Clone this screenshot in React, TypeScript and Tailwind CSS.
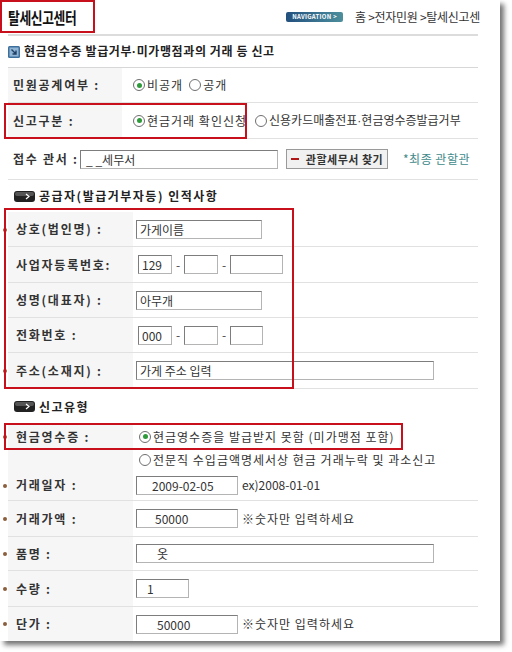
import React from 'react';

const font = { fontFamily: '"Noto Sans CJK KR", "Noto Sans", sans-serif' };

function Radio({ checked }: { checked?: boolean }) {
  return (
    <span className="inline-flex items-center justify-center w-[12px] h-[12px] rounded-full border border-[#6f6f6f] bg-white mr-[2px] shrink-0">
      {checked && <span className="w-[5px] h-[5px] rounded-full bg-[#2f9a3a]" />}
    </span>
  );
}

function Box({ w, children, className = '' }: { w: string; children?: React.ReactNode; className?: string }) {
  return (
    <div
      className={`${w} h-[19px] border border-[#b4b4b4] border-t-[#7d7d7d] border-l-[#7d7d7d] bg-white text-[12px] leading-[17px] text-[#333] px-[3px] overflow-hidden whitespace-nowrap ${className}`}
    >
      {children}
    </div>
  );
}

function Dash() {
  return <span className="w-[12px] text-center text-[12px] text-[#444]">-</span>;
}

function Dot() {
  // narrow middle dot, the CJK one is full width
  return <span className="font-['Liberation_Sans',sans-serif]">·</span>;
}

function Star({ on }: { on?: boolean }) {
  return (
    <div className="w-[5px] flex items-center justify-start">
      {on && <span className="w-[4px] h-[4px] rounded-full bg-[#8b5e3c]" />}
    </div>
  );
}

function Row({
  h,
  star,
  label,
  labelW = 'w-[122px]',
  pl = 'pl-[8px]',
  line = true,
  children,
}: {
  h: string;
  star?: boolean;
  label?: string;
  labelW?: string;
  pl?: string;
  line?: boolean;
  children?: React.ReactNode;
}) {
  return (
    <div className="flex pl-[3px]">
      <Star on={star} />
      <div className={`flex w-[470px] ${h} ${line ? 'border-b border-[#e1e1e1]' : ''}`}>
        <div
          className={`${labelW} ${pl} bg-[#f6f6f6] flex items-center text-[12px] font-bold text-[#333] tracking-[1.75px] whitespace-nowrap`}
        >
          {label}
        </div>
        <div className="flex-1 flex items-center text-[12px] text-[#333] whitespace-nowrap overflow-hidden">
          {children}
        </div>
      </div>
    </div>
  );
}

function SectionIcon() {
  return (
    <svg width="21" height="11" viewBox="0 0 21 11" className="mr-[4px]">
      <rect x="0" y="0" width="21" height="11" rx="3" fill="#222" />
      <rect x="1" y="1" width="19" height="4" rx="2" fill="#555" />
      <path d="M12 3 L15 5.5 L12 8" stroke="#fff" strokeWidth="1.2" fill="none" />
    </svg>
  );
}

function Section({ title }: { title: string }) {
  return (
    <div className="flex items-center pl-[14px] text-[12px] font-bold text-[#222] tracking-[1.5px] whitespace-nowrap">
      <SectionIcon />
      {title}
    </div>
  );
}

export default function App() {
  return (
    <div className="w-[512px] h-[652px] bg-white relative overflow-hidden" style={font}>
      <div className="w-[500px] h-[641px] bg-white shadow-[4px_4px_5px_rgba(0,0,0,0.55)] relative">
        <div className="w-[480px] overflow-hidden">
          {/* title */}
          <div className="h-[34px] flex items-center justify-between pl-[8px]">
            <div className="inline-block origin-left scale-x-[0.8] text-[16px] font-bold text-[#111] tracking-[-0.5px] whitespace-nowrap">
              탈세신고센터
            </div>
            <div className="flex items-center gap-[12px] whitespace-nowrap">
              <div className="w-[57px] h-[10px] rounded-[2px] bg-linear-to-r from-[#23507e] to-[#4d8f9c] flex items-center justify-center text-[6px] leading-none font-bold text-white tracking-[0.3px]">
                NAVIGATION &gt;
              </div>
              <div className="text-[12px] text-[#333] tracking-[-0.3px]">홈 &gt;전자민원 &gt;탈세신고센</div>
            </div>
          </div>
          <div className="ml-[8px] w-[470px] h-[2px] bg-[#dcdcdc]" />

          {/* heading */}
          <div className="h-[32px] flex items-center ml-[8px] w-[470px] border-b border-[#d7d7d7]">
            <svg width="12" height="12" viewBox="0 0 12 12" className="mr-[4px]">
              <rect x="0" y="0" width="12" height="12" rx="1.5" fill="#3d6f9c" />
              <rect x="1.5" y="1.5" width="9" height="9" fill="#8fb4d4" />
              <path d="M3.5 3.5 L8 8 M8 4.5 L8 8 L4.5 8" stroke="#1f3f66" strokeWidth="1.4" fill="none" />
            </svg>
            <span className="text-[12px] font-bold text-[#222] tracking-[0.6px] whitespace-nowrap">
              현금영수증 발급거부<Dot />미가맹점과의 거래 등 신고
            </span>
          </div>

          <Row h="h-[35px]" label="민원공계여부 :" labelW="w-[114px]" pl="pl-[5px]">
            <div className="pl-[11px] flex items-center tracking-[1px]">
              <Radio checked />
              <span>비공개</span>
              <span className="w-[6px]" />
              <Radio />
              <span>공개</span>
            </div>
          </Row>
          <Row h="h-[36px]" label="신고구분 :" labelW="w-[114px]" pl="pl-[5px]">
            <div className="pl-[11px] flex items-center">
              <Radio checked />
              <span className="tracking-[1px]">현금거래 확인신청</span>
              <span className="w-[8px]" />
              <Radio />
              <span>신용카드매출전표<Dot />현금영수증발급거부</span>
            </div>
          </Row>
          <div className="flex pl-[3px]">
            <Star />
            <div className="flex items-center w-[470px] h-[41px] border-b border-[#e1e1e1] pl-[5px] text-[12px] whitespace-nowrap">
              <span className="font-bold text-[#333] tracking-[1.75px] w-[67px]">접수 관서 :</span>
              <Box w="w-[198px]" className="pl-[5px]">_ _세무서</Box>
              <div className="ml-[8px] w-[102px] h-[20px] border border-[#9a9a9a] bg-[#f1f1f1] flex items-center justify-center text-[11px] font-bold text-[#333] tracking-[0.5px]">
                <span className="w-[8px] h-[2px] bg-[#b01818] mr-[7px]" />
                관할세무서 찾기
              </div>
              <span className="ml-[15px] text-[12px] text-[#3f8a8a] tracking-[0.5px]">*최종 관할관</span>
            </div>
          </div>

          <div className="h-[32px] flex items-center">
            <Section title="공급자(발급거부자등) 인적사항" />
          </div>

          <Row h="h-[35px]" star label="상호(법인명) :" labelW="w-[125px]">
            <Box w="w-[126px]" className="ml-[3px]">가게이름</Box>
          </Row>
          <Row h="h-[36px]" label="사업자등록번호:" labelW="w-[125px]">
            <div className="flex items-center ml-[5px]">
              <Box w="w-[34px]">129</Box>
              <Dash />
              <Box w="w-[34px]" />
              <Dash />
              <Box w="w-[53px]" />
            </div>
          </Row>
          <Row h="h-[35px]" label="성명(대표자) :" labelW="w-[125px]">
            <Box w="w-[126px]" className="ml-[3px]">아무개</Box>
          </Row>
          <Row h="h-[35px]" label="전화번호 :" labelW="w-[125px]">
            <div className="flex items-center ml-[5px]">
              <Box w="w-[34px]">000</Box>
              <Dash />
              <Box w="w-[34px]" />
              <Dash />
              <Box w="w-[33px]" />
            </div>
          </Row>
          <Row h="h-[36px]" star label="주소(소재지) :" labelW="w-[125px]">
            <Box w="w-[298px]" className="ml-[3px]">가게 주소 입력</Box>
          </Row>

          <div className="h-[35px] flex items-center">
            <Section title="신고유형" />
          </div>

          <Row h="h-[25px]" star label="현금영수증 :" labelW="w-[125px]" line={false}>
            <div className="ml-[6px] flex items-center tracking-[1px]">
              <Radio checked />
              <span>현금영수증을 발급받지 못함 (미가맹점 포함)</span>
            </div>
          </Row>
          <Row h="h-[21px]" labelW="w-[125px]" line={false}>
            <div className="ml-[6px] flex items-center tracking-[1px]">
              <Radio />
              <span>전문직 수입금액명세서상 현금 거래누락 및 과소신고</span>
            </div>
          </Row>
          <Row h="h-[31px]" star label="거래일자 :" labelW="w-[125px]">
            <Box w="w-[102px]" className="ml-[3px] pl-[15px]">2009-02-05</Box>
            <span className="ml-[4px]">ex)2008-01-01</span>
          </Row>
          <Row h="h-[36px]" star label="거래가액 :" labelW="w-[125px]">
            <Box w="w-[102px]" className="ml-[3px] pl-[18px]">50000</Box>
            <span className="ml-[4px] tracking-[1px]">※숫자만 입력하세요</span>
          </Row>
          <Row h="h-[34px]" star label="품명 :" labelW="w-[125px]">
            <Box w="w-[298px]" className="ml-[3px] pl-[20px]">옷</Box>
          </Row>
          <Row h="h-[36px]" star label="수량 :" labelW="w-[125px]">
            <Box w="w-[53px]" className="ml-[3px] pl-[10px]">1</Box>
          </Row>
          <Row h="h-[34px]" star label="단가 :" labelW="w-[125px]" line={false}>
            <Box w="w-[102px]" className="ml-[3px] pl-[20px]">50000</Box>
            <span className="ml-[4px] tracking-[1px]">※숫자만 입력하세요</span>
          </Row>
        </div>

        {/* red annotation boxes */}
        <div className="absolute left-0 top-0 w-[95px] h-[33px] border-2 border-[#c8101c]" />
        <div className="absolute left-[4px] top-[103px] w-[243px] h-[36px] border-2 border-[#c8101c]" />
        <div className="absolute left-[4px] top-[208px] w-[290px] h-[181px] border-2 border-[#c8101c]" />
        <div className="absolute left-[4px] top-[423px] w-[399px] h-[27px] border-2 border-[#c8101c]" />
      </div>
    </div>
  );
}
